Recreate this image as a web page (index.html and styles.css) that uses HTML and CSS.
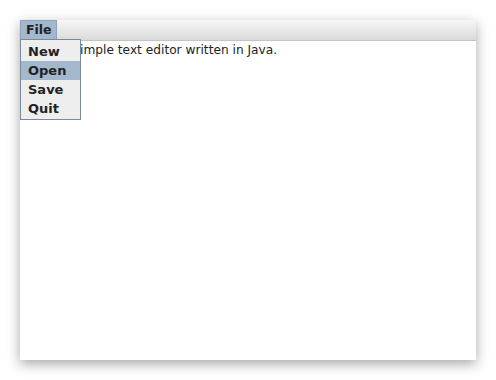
FILE: index.html
```html
<!DOCTYPE html>
<html lang="en">
<head>
  <meta charset="UTF-8">
  <title>Editor</title>
  <link rel="stylesheet" href="styles.css">
</head>
<body>
  <div class="window">
    <div class="menubar">
      <div class="menu open">
        <span class="menu-title">File</span>
        <ul class="popup">
          <li>New</li>
          <li class="active">Open</li>
          <li>Save</li>
          <li>Quit</li>
        </ul>
      </div>
    </div>
    <div class="text-area">This is a simple text editor written in Java.</div>
  </div>
</body>
</html>
```

FILE: styles.css
```css
* {
  margin: 0;
  padding: 0;
  box-sizing: border-box;
}

body {
  font-family: "DejaVu Sans", sans-serif;
  background: #fff;
  width: 496px;
  height: 380px;
  overflow: hidden;
}

.window {
  margin: 20px;
  width: 456px;
  height: 340px;
  background: #fff;
  display: flex;
  flex-direction: column;
  box-shadow: 0 4px 12px rgba(0,0,0,0.35);
}

.menubar {
  height: 21px;
  display: flex;
  background: linear-gradient(to bottom, #f6f6f6, #e9e9e9 50%, #dadada);
  border-bottom: 1px solid #c4c4c4;
}

.menu {
  position: relative;
}

.menu-title {
  display: block;
  height: 20px;
  padding: 1px 6px 0 7px;
  font-size: 12.5px;
  font-weight: bold;
  color: #222;
  line-height: 18px;
}

.menu.open .menu-title {
  background: #a3b8cc;
  border: 1px solid #8ea4ba;
  border-bottom: none;
  padding: 0 4px 0 5px;
}

.popup {
  position: absolute;
  top: 19px;
  left: 0;
  width: 61px;
  height: 81px;
  list-style: none;
  background: #eeeeee;
  border: 1px solid #7a8a99;
  padding-top: 2px;
  z-index: 2;
}

.popup li {
  height: 19px;
  padding-left: 7px;
  font-size: 13px;
  font-weight: bold;
  color: #222;
  line-height: 19px;
}

.popup li.active {
  background: #a3b8cc;
}

.text-area {
  flex: 1;
  padding: 2px 0 0 0;
  font-size: 12.2px;
  color: #222;
  line-height: 15px;
}
```
